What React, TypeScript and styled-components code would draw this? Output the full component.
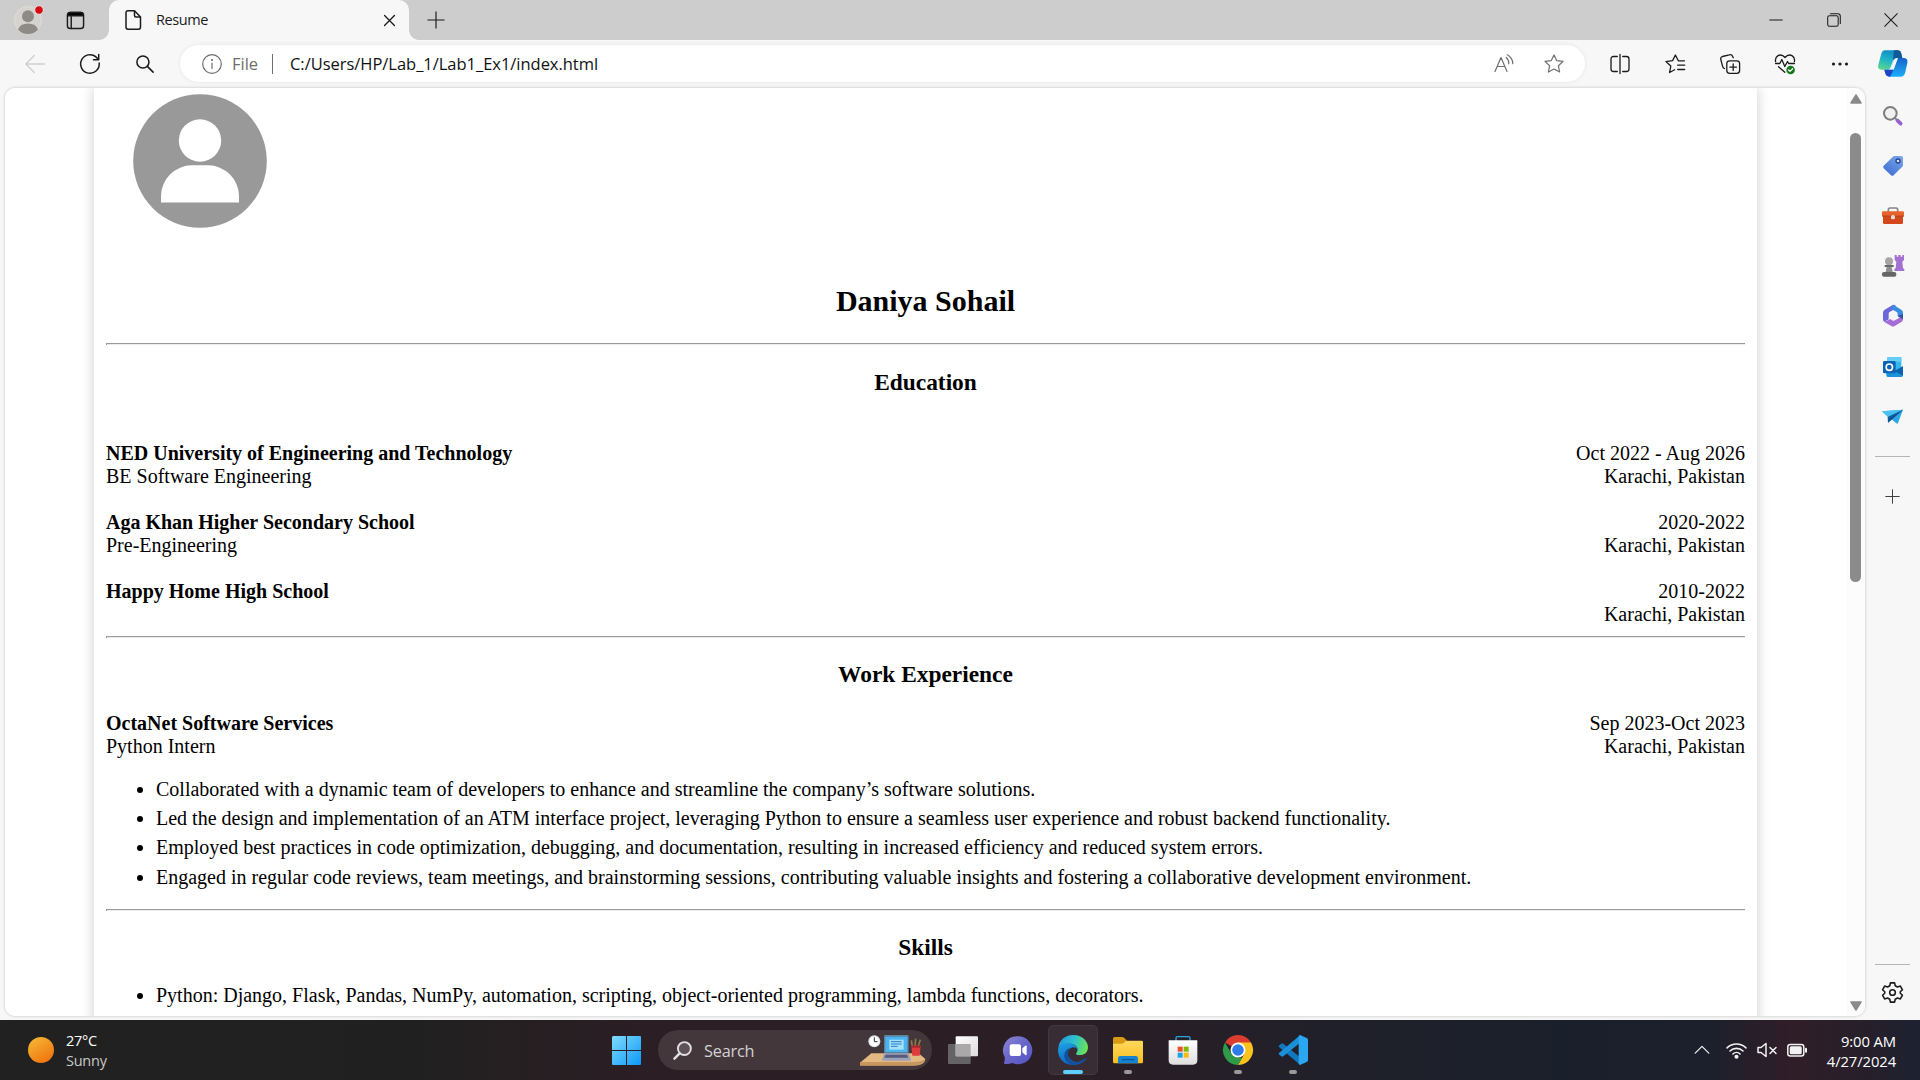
import React from "react";
import styled, { createGlobalStyle } from "styled-components";

const Global = createGlobalStyle`
  * { box-sizing: border-box; }
  body { margin: 0; background: #f7f7f7; overflow: hidden; }
  svg { display: block; overflow: visible; flex: none; }
`;

const uiFont = `"Open Sans", "Noto Sans", sans-serif`;

const Screen = styled.div`
  width: 1920px;
  height: 1080px;
  display: flex;
  flex-direction: column;
  overflow: hidden;
  font-family: ${uiFont};
  background: #f7f7f7;
`;

/* ---------- tab strip ---------- */
const TabStrip = styled.header`
  height: 40px;
  display: flex;
  align-items: center;
  background: #cdcdcd;
`;
const ProfileButton = styled.div`
  width: 55px;
  padding-left: 13px;
`;
const WorkspaceButton = styled.div`
  width: 54px;
  padding-left: 11px;
`;
const Tab = styled.div`
  position: relative;
  width: 300px;
  height: 40px;
  display: flex;
  align-items: center;
  padding: 0 14px 0 16px;
  background: #f7f7f7;
  border-radius: 10px 10px 0 0;
  &::before, &::after {
    content: "";
    position: absolute;
    bottom: 0;
    width: 10px;
    height: 10px;
  }
  &::before { left: -10px; background: radial-gradient(circle at 0 0, #cdcdcd 9.5px, #f7f7f7 10.2px); }
  &::after { right: -10px; background: radial-gradient(circle at 100% 0, #cdcdcd 9.5px, #f7f7f7 10.2px); }
`;
const TabTitle = styled.span`
  flex: 1;
  margin-left: 14px;
  font-size: 14.5px;
  line-height: 20px;
  letter-spacing: -0.4px;
  color: #1b1b1b;
`;
const NewTab = styled.div`
  margin-left: 18px;
`;
const WindowButtons = styled.div`
  margin-left: auto;
  display: flex;
`;
const WindowButton = styled.div`
  width: 57.5px;
  display: flex;
  justify-content: center;
`;

/* ---------- toolbar ---------- */
const Toolbar = styled.div`
  height: 48px;
  display: flex;
  align-items: center;
  padding: 0 0 1px 7px;
`;
const ToolSlot = styled.div<{ $w?: number }>`
  width: ${(p) => p.$w ?? 55}px;
  display: flex;
  justify-content: center;
`;
const AddressBar = styled.div`
  width: 1405px;
  height: 37px;
  margin: 0 7px 0 8px;
  padding: 0 21px 0 22px;
  display: flex;
  align-items: center;
  background: #fff;
  border-radius: 19px;
  box-shadow: 0 0 4px rgba(0, 0, 0, 0.08);
`;
const Scheme = styled.span`
  width: 40px;
  margin-left: 10px;
  font-size: 16.5px;
  letter-spacing: 0;
  color: #6e6e6e;
`;
const SchemeDivider = styled.i`
  width: 1px;
  height: 20px;
  background: #6e6e6e;
  margin-right: 17px;
`;
const Url = styled.span`
  flex: 1;
  font-size: 16.5px;
  letter-spacing: -0.03px;
  color: #111;
  white-space: nowrap;
`;
const AddressActions = styled.div`
  display: flex;
  gap: 30px;
`;

/* ---------- page area ---------- */
const Body = styled.div`
  height: 932px;
  display: flex;
  align-items: flex-start;
  padding-left: 5px;
`;
const Viewport = styled.main`
  width: 1860px;
  height: 928px;
  display: flex;
  background: #fff;
  border-radius: 10px;
  overflow: hidden;
`;
const ViewportFrame = styled.div`
  border-radius: 10px;
  box-shadow: 0 0 3px rgba(0, 0, 0, 0.25);
`;
const Canvas = styled.div`
  flex: 1;
  padding-left: 89px;
`;
const Sheet = styled.article`
  width: 1663px;
  height: 1400px;
  padding: 6px 12px 0;
  background: #fff;
  box-shadow: 0 0 12.5px rgba(0, 0, 0, 0.2);
  font-family: "Liberation Serif", "Times New Roman", serif;
  font-size: 20px;
  line-height: 23px;
  color: #000;
`;
const Portrait = styled.div`
  margin: 0 0 56px 27px;
`;
const Name = styled.h1`
  margin: 0;
  font-size: 30px;
  line-height: 34px;
  text-align: center;
`;
const Rule = styled.hr<{ $top: number }>`
  height: 2px;
  margin: ${(p) => p.$top}px 0 0;
  border: 0;
  border-top: 1px solid #9a9a9a;
  border-left: 1px solid #9a9a9a;
  background: #ececec;
`;
const Heading = styled.h3<{ $top?: number }>`
  margin: ${(p) => p.$top ?? 24}px 0 0;
  font-size: 23.4px;
  line-height: 26px;
  text-align: center;
`;
const Entries = styled.div<{ $top: number }>`
  display: flex;
  flex-direction: column;
  gap: 23px;
  margin-top: ${(p) => p.$top}px;
`;
const Entry = styled.div`
  display: flex;
  justify-content: space-between;
`;
const EntrySide = styled.div<{ $right?: boolean }>`
  display: flex;
  flex-direction: column;
  text-align: ${(p) => (p.$right ? "right" : "left")};
`;
const Bullets = styled.ul<{ $top: number }>`
  margin: ${(p) => p.$top}px 0 0;
  padding-left: 50px;
`;
const Bullet = styled.li`
  margin-bottom: 6.25px;
`;
const Scrollbar = styled.div`
  width: 18px;
  height: 928px;
  display: flex;
  flex-direction: column;
  align-items: center;
  padding: 6px 1px 5px 0;
  background: #fcfcfc;
`;
const Thumb = styled.div`
  width: 11px;
  height: 449px;
  margin: 29px 0 auto;
  border-radius: 6px;
  background: #8b8b8b;
`;

/* ---------- sidebar ---------- */
const Sidebar = styled.aside`
  width: 55px;
  height: 932px;
  display: flex;
  flex-direction: column;
  align-items: center;
  padding-top: 3px;
`;
const SideSlot = styled.div<{ $h?: number }>`
  height: ${(p) => p.$h ?? 50.1}px;
  display: flex;
  align-items: center;
`;
const SideRule = styled.i<{ $top?: string }>`
  width: 35px;
  height: 1px;
  margin-top: ${(p) => p.$top ?? "0"};
  background: #b5b5b5;
`;

/* ---------- taskbar ---------- */
const Taskbar = styled.footer`
  height: 60px;
  display: flex;
  align-items: center;
  color: #fff;
  background: linear-gradient(90deg, #212121 0, #212020 420px, #2b1e24 640px, #2b1e25 1080px, #20202a 1330px, #1a202b 1560px, #1b202c 1710px, #301e28 1790px, #2a1f29 1840px, #1e2130 1920px);
`;
const Weather = styled.div`
  width: 599px;
  display: flex;
  align-items: center;
  gap: 12px;
  padding-left: 28px;
`;
const WeatherText = styled.div`
  display: flex;
  flex-direction: column;
  padding-top: 1px;
  font-size: 14.5px;
  line-height: 20px;
  letter-spacing: -0.25px;
`;
const Dim = styled.span`
  color: #c9c9c9;
`;
const StartButton = styled.div`
  width: 59px;
  padding-left: 13px;
`;
const SearchBox = styled.div`
  width: 274px;
  height: 40px;
  display: flex;
  align-items: center;
  padding: 0 6px 0 15px;
  margin-right: 3px;
  border-radius: 20px;
  background: #43373c;
`;
const SearchLabel = styled.span`
  flex: 1;
  margin: 1px 0 0 12px;
  font-size: 16.3px;
  letter-spacing: -0.2px;
  color: #d5d1d3;
`;
const AppSlot = styled.div`
  width: 55px;
  display: flex;
  justify-content: center;
`;
const AppTile = styled.div<{ $active?: boolean }>`
  width: 50px;
  height: 50px;
  display: flex;
  flex-direction: column;
  align-items: center;
  justify-content: space-between;
  padding: ${(p) => (p.$active ? "9px 0 0" : "10px 0 1px")};
  border-radius: 5px;
  border: ${(p) => (p.$active ? "1px solid #43383f" : "0")};
  background: ${(p) => (p.$active ? "#392d35" : "transparent")};
`;
const Indicator = styled.i<{ $kind?: "active" | "open" }>`
  width: ${(p) => (p.$kind === "active" ? 20 : 8)}px;
  height: 4px;
  border-radius: 2px;
  background: ${(p) => (p.$kind === "active" ? "#60cdff" : p.$kind ? "#9b989c" : "transparent")};
`;
const Tray = styled.div`
  margin-left: auto;
  display: flex;
  align-items: center;
  padding-right: 24px;
`;
const TrayIcons = styled.div`
  display: flex;
  align-items: center;
  gap: 10px;
`;
const Overflow = styled.div`
  margin-right: 6px;
`;
const Clock = styled.div`
  width: 89px;
  display: flex;
  flex-direction: column;
  padding-top: 1px;
  text-align: right;
  font-size: 14.8px;
  line-height: 20px;
  letter-spacing: -0.1px;
`;

/* Line drawing wrapper: 20-unit grid, stroke only */
const Line = ({ s = 20, c = "#1b1b1b", w = 1.3, children }: { s?: number; c?: string; w?: number; children: React.ReactNode }) => (
  <svg width={s} height={s} viewBox="0 0 20 20" fill="none" stroke={c} strokeWidth={w} strokeLinecap="round" strokeLinejoin="round">
    {children}
  </svg>
);

const starPath = "M10 .9l2.7 5.7 6.3.8-4.6 4.3 1.2 6.3L10 15l-5.6 3 1.2-6.3L1 7.400l6.3-.8z";

const Copilot = () => (
  <svg width="30" height="27" viewBox="0 0 90 81">
    <defs>
      <linearGradient id="cpa" x1=".6" y1="0" x2=".2" y2="1"><stop stopColor="#1389c6" /><stop offset=".5" stopColor="#1fb3c6" /><stop offset="1" stopColor="#58d88a" /></linearGradient>
      <linearGradient id="cpb" x1=".5" y1="0" x2=".5" y2="1"><stop stopColor="#1663c9" /><stop offset="1" stopColor="#1eaefb" /></linearGradient>
    </defs>
    <path d="M21 1h38q8 0 11 10l3 13H58q-10 0-13 8l-8 21q-2 6-8 6H11Q-3 58 1 44L9 14Q12 1 21 1z" fill="url(#cpa)" />
    <path d="M48 1h11q8 0 11 10l3 13H57q-9 0-12 7 2-22 3-30z" fill="#125a96" />
    <path d="M69 80H34q-9 0-12-10l-3-11h10q8 0 11-8l8-21q2-6 9-6h19q15 0 12 15l-6 27Q79 80 69 80z" fill="url(#cpb)" />
    <path d="M48 30q2-6 9-6h3L47 59H29q8 0 11-8z" fill="#f7f9fc" />
    <path d="M19 59h27l-7 17q-2 4-5 4-9 0-12-10z" fill="#1c47c7" />
  </svg>
);

const Edge = () => (
  <svg width="30" height="30" viewBox="0 0 90 90">
    <defs>
      <linearGradient id="ea" x1="0" y1=".3" x2="1" y2=".5"><stop stopColor="#2598dc" /><stop offset=".5" stopColor="#2dbfd0" /><stop offset="1" stopColor="#6be454" /></linearGradient>
      <linearGradient id="eb" x1=".2" y1="0" x2=".5" y2="1"><stop stopColor="#1c9fe4" /><stop offset="1" stopColor="#0f63bb" /></linearGradient>
    </defs>
    <path d="M1 38C4 14 23 0 46 0c26 0 44 18 44 37 0 15-11 24-25 24-11 0-13-5-10-8 3-4 4-8 3-13-2-9-12-14-23-14C19 26 6 31 1 38z" fill="url(#ea)" />
    <path d="M0 46c0-13 12-22 28-22 18 0 29 9 30 19-4-6-11-8-18-5-12 5-13 17-8 28 7 14 23 18 40 14-8 7-18 10-28 10C18 90 0 70 0 46z" fill="url(#eb)" />
    <path d="M36 40c-8 10-9 24 1 34 11 11 29 9 45-4 3-2 5 0 3 2-9 12-23 18-38 18-19-3-29-17-28-31 1-9 7-17 17-19z" fill="#12519f" />
    <path d="M57 43c2 5 0 8-2 10-3 3-1 8 10 8 5 0 10-1 14-4l6 9c-14 9-34 8-42-3-5-8-3-18 3-22 4-2 8-1 11 2z" fill="#392d35" />
  </svg>
);

const Chrome = () => (
  <svg width="30" height="30" viewBox="0 0 90 90">
    <path d="M45 45L6 22.500A45 45 0 0 1 84 22.500z" fill="#dc3b2f" />
    <path d="M45 22.500H84A45 45 0 0 1 45 90L64 56z" fill="#fcc21b" />
    <path d="M6 22.500L25.500 56 45 67.500h13L45 90A45 45 0 0 1 6 22.500z" fill="#2f9a48" />
    <circle cx="45" cy="45" r="22.500" fill="#fff" />
    <circle cx="45" cy="45" r="17.500" fill="#2f7de9" />
  </svg>
);

const VsCode = () => (
  <svg width="30" height="30" viewBox="0 0 90 90">
    <path d="M4 31l6-5q3-2 6 0l54 44-4 19L3 36q-3-2 1-5z" fill="#1178bd" />
    <path d="M4 59l6 5q3 2 6 0l54-44L66 1 3 54q-3 2 1 5z" fill="#1b8fd8" />
    <path d="M66 0l20 9q4 2 4 6v60q0 4-4 6l-20 9q-4-1-4-5V5q0-4 4-5z" fill="#2ba7f2" />
  </svg>
);

const Folder = () => (
  <svg width="30" height="30" viewBox="0 0 90 90">
    <defs><linearGradient id="fo" x1="0" y1="0" x2="0" y2="1"><stop stopColor="#ffd95c" /><stop offset="1" stopColor="#f9bd20" /></linearGradient></defs>
    <path d="M0 11q0-5 5-5h22q4 0 7 3l7 7v14H0z" fill="#d99a13" />
    <path d="M0 26h26q4 0 7-3l7-6h46q4 0 4 4v59q0 5-4 5H4q-4 0-4-5z" fill="url(#fo)" />
    <path d="M15 85V70q0-7 7-7h46q7 0 7 7v15z" fill="#1583cf" />
    <path d="M27 74h37" stroke="#0b4f8d" strokeWidth="3" />
  </svg>
);

const Store = () => (
  <svg width="30" height="30" viewBox="0 0 90 90">
    <defs><linearGradient id="st" x1="0" y1="0" x2="0" y2="1"><stop stopColor="#fff" /><stop offset="1" stopColor="#dedede" /></linearGradient></defs>
    <path d="M24 20V9q0-4 4-4h34q4 0 4 4v11" fill="none" stroke="#2ba5dd" strokeWidth="4" />
    <path d="M2 16h86v60q0 13-13 13H15Q2 89 2 76z" fill="url(#st)" />
    <path d="M29 35h15v15H29z" fill="#e8512c" /><path d="M47 35h15v15H47z" fill="#80b900" />
    <path d="M29 53h15v15H29z" fill="#18a5e8" /><path d="M47 53h15v15H47z" fill="#fcb90f" />
  </svg>
);

const Chat = () => (
  <svg width="30" height="30" viewBox="0 0 90 90">
    <defs><linearGradient id="ch" x1="0" y1="0" x2="1" y2="1"><stop stopColor="#8e86d2" /><stop offset=".5" stopColor="#6865c8" /><stop offset="1" stopColor="#5254c6" /></linearGradient></defs>
    <path d="M45 4a42 42 0 1 1-17 80Q16 89 4 86q-2-1-1-3 3-8 2-17A42 42 0 0 1 45 4z" fill="url(#ch)" />
    <rect x="20" y="28" width="34" height="35" rx="6" fill="#fff" /><path d="M58 40l9-8q4-2 4 2v24q0 4-4 2l-9-8z" fill="#fff" />
  </svg>
);

const TaskView = () => (
  <svg width="30" height="30" viewBox="0 0 90 90">
    <defs><linearGradient id="tv" x1="0" y1="0" x2="1" y2="1"><stop stopColor="#fff" /><stop offset="1" stopColor="#dcdcdc" /></linearGradient></defs>
    <rect x="0" y="27" width="68" height="60" rx="3" fill="#666365" />
    <rect x="23" y="4" width="67" height="60" rx="3" fill="url(#tv)" />
    <path d="M23 27h45v37H23z" fill="#aaa8a9" />
  </svg>
);

const Desk = () => (
  <svg width="66" height="32" viewBox="0 0 198 96">
    <path d="M0 86L34 58h142l20 17q-3 19-34 19H0z" fill="#e3b982" />
    <path d="M0 84h160q25 0 36-9-2 20-34 20H0z" fill="#c9965f" />
    <circle cx="43" cy="22" r="18" fill="#dfe5ea" /><circle cx="43" cy="22" r="14" fill="#fff" />
    <path d="M43 10v13h10" stroke="#333" strokeWidth="3" fill="none" />
    <rect x="72" y="3" width="74" height="56" rx="4" fill="#5f7f9d" /><path d="M76 8h66v46H76z" fill="#49b4ee" />
    <path d="M88 17h43v30H88z" fill="#a4e0fb" /><path d="M93 23h32M93 30h32M93 37h20" stroke="#2a7fc0" strokeWidth="3" />
    <path d="M72 58h74l8 22H66z" fill="#9fa0b9" /><path d="M77 62h64l4 9H73z" fill="#555b7a" />
    <path d="M157 38l-3-19M165 38l2-24M174 38l7-21" stroke="#8e7a45" strokeWidth="5" />
    <path d="M154 35h28l-3 30h-22z" fill="#df3b3b" /><path d="M154 35h28v6h-28z" fill="#a92530" />
  </svg>
);

const apps: { id: string; icon: React.ReactNode; state?: "active" | "open" }[] = [
  { id: "view", icon: <TaskView /> },
  { id: "chat", icon: <Chat /> },
  { id: "edge", icon: <Edge />, state: "active" },
  { id: "files", icon: <Folder />, state: "open" },
  { id: "store", icon: <Store /> },
  { id: "chrome", icon: <Chrome />, state: "open" },
  { id: "code", icon: <VsCode />, state: "open" },
];

const schools = [
  { title: "NED University of Engineering and Technology", sub: "BE Software Engineering", date: "Oct 2022 - Aug 2026" },
  { title: "Aga Khan Higher Secondary School", sub: "Pre-Engineering", date: "2020-2022" },
  { title: "Happy Home High School", sub: "", date: "2010-2022" },
];
const jobs = [{ title: "OctaNet Software Services", sub: "Python Intern", date: "Sep 2023-Oct 2023" }];
const duties = [
  "Collaborated with a dynamic team of developers to enhance and streamline the company’s software solutions.",
  "Led the design and implementation of an ATM interface project, leveraging Python to ensure a seamless user experience and robust backend functionality.",
  "Employed best practices in code optimization, debugging, and documentation, resulting in increased efficiency and reduced system errors.",
  "Engaged in regular code reviews, team meetings, and brainstorming sessions, contributing valuable insights and fostering a collaborative development environment.",
];

const EntryList = ({ items, top }: { items: typeof schools; top: number }) => (
  <Entries $top={top}>
    {items.map((e) => (
      <Entry key={e.title}>
        <EntrySide><b>{e.title}</b>{e.sub && <span>{e.sub}</span>}</EntrySide>
        <EntrySide $right><span>{e.date}</span><span>Karachi, Pakistan</span></EntrySide>
      </Entry>
    ))}
  </Entries>
);

const sideIcons: React.ReactNode[] = [
  <svg width="20" height="20" viewBox="0 0 60 60"><circle cx="22" cy="22" r="19" fill="#f0f0f0" stroke="#7d7d7d" strokeWidth="6" /><path d="M36 36l5 5" stroke="#7d7d7d" strokeWidth="5" /><path d="M43 43l10 10" stroke="#9663cb" strokeWidth="11" strokeLinecap="round" /></svg>,
  <svg width="20" height="20" viewBox="0 0 60 60"><defs><linearGradient id="tg" x1="1" y1="0" x2=".3" y2="1"><stop stopColor="#7fa9ec" /><stop offset="1" stopColor="#4170d4" /></linearGradient></defs><path d="M29 3Q31 0 35 0h20q5 0 5 5v22q0 4-3 6L32 58q-4 3-8 0L2 37q-3-4 0-8z" fill="url(#tg)" /><circle cx="45" cy="15" r="6" fill="#d9e5fa" stroke="#22448c" strokeWidth="4" /></svg>,
  <svg width="22" height="18" viewBox="0 0 66 54"><path d="M19 15V8q0-5 5-5h18q5 0 5 5v7" fill="none" stroke="#858585" strokeWidth="5" /><rect x="3" y="24" width="60" height="27" rx="4" fill="#d5481b" /><rect x="0" y="13" width="66" height="16" rx="4" fill="#e8622c" /><path d="M1 26h64v3H1z" fill="#b03a12" /><rect x="27" y="24" width="12" height="13" rx="5" fill="#e0dcda" /></svg>,
  <svg width="22" height="22" viewBox="0 0 66 66"><path d="M38 0h6v5h5V0h7v5h5V0h5v15l-5 5 2 19 4 4v5H37v-5l4-4 2-19-5-5z" fill="#a471d2" /><circle cx="21" cy="19" r="12" fill="#a5a5a5" /><path d="M8 30h27v6H8z" fill="#666" /><path d="M14 35h15l3 16H11z" fill="#8f8f8f" /><rect x="0" y="51" width="43" height="14" rx="6" fill="#666" /></svg>,
  <svg width="20" height="22" viewBox="0 0 60 66"><path d="M29 0L5 14Q0 17 0 23v20q0 5 4 8l13-8V26q0-4 4-6l17-9V2q-4-4-9-2z" fill="#6a67d8" /><path d="M33 1l22 13q5 3 5 9v21L44 34V27q0-4-3-6l-15-8 3-13z" fill="#3b8de0" /><path d="M60 42q0 6-5 9L35 63q-5 3-10 0L4 51l18-9 8 5q3 1 6-1l24-14z" fill="#a56cd6" /><path d="M44 33l16 10V26z" fill="#3551a5" /><circle cx="30" cy="33" r="11" fill="#f5f4fb" /></svg>,
  <svg width="20" height="20" viewBox="0 0 60 60"><rect x="13" y="0" width="42" height="50" rx="3" fill="#35b8f1" /><path d="M13 0h42v14H13z" fill="#64cdf8" /><path d="M10 32l25 10 25-14v27q0 5-5 5H14q-4 0-4-5z" fill="#1b93d8" /><path d="M60 28v28L34 42z" fill="#0d62ad" /><rect x="0" y="12" width="38" height="37" rx="4" fill="#0b63b5" /><circle cx="19" cy="30.500" r="9.500" fill="none" stroke="#fff" strokeWidth="5" /></svg>,
  <svg width="21" height="16" viewBox="0 0 63 48"><path d="M0 7L63 2 48 42q-2 4-5 1L23 26z" fill="#2ba8e5" /><path d="M0 7L63 2 17 24z" fill="#49c0f2" /><path d="M63 2L17 24l1 17z" fill="#115c9d" /><path d="M63 2L23 29l-5 12 10-9z" fill="#0e4f8c" /></svg>,
];

export default function App() {
  return (
    <Screen>
      <Global />
      <TabStrip>
        <ProfileButton>
          <svg width="30" height="30" viewBox="0 0 30 30">
            <circle cx="15" cy="15" r="13.500" fill="#d5d3cf" stroke="#dedcd9" />
            <circle cx="15" cy="11.200" r="6" fill="#8e8a85" />
            <path d="M5 24.500q2-6 10-6t10 6q-4 4.500-10 4.500t-10-4.500z" fill="#8e8a85" />
            <circle cx="26" cy="5" r="4.300" fill="#d90b12" stroke="#e5e5e5" />
          </svg>
        </ProfileButton>
        <WorkspaceButton>
          <Line s={19} w={1.5}>
            <rect x="1.500" y="1.500" width="17" height="17" rx="3" /><path d="M5.500 6v12.500" /><path d="M2 5V4q0-2.500 2.500-2.500h11Q18 1.500 18 4v1z" fill="#000" />
          </Line>
        </WorkspaceButton>
        <Tab>
          <svg width="17" height="20" viewBox="0 0 17 20" fill="none" stroke="#1b1b1b" strokeWidth="1.500" strokeLinejoin="round">
            <path d="M3 .8h6.500L15.500 7v10q0 2.200-2 2.200H3q-2 0-2-2.200V3Q1 .8 3 .8z" /><path d="M9.500 1v4.500q0 1.500 1.500 1.500h4.500" />
          </svg>
          <TabTitle>Resume</TabTitle>
          <Line s={11} w={2.4}><path d="M1 1l18 18M19 1L1 19" /></Line>
        </Tab>
        <NewTab><Line s={18} w={1.3}><path d="M10 1v18M1 10h18" /></Line></NewTab>
        <WindowButtons>
          <WindowButton><Line s={14} w={1.5}><path d="M1 10h18" /></Line></WindowButton>
          <WindowButton><Line s={14} w={1.5}><rect x="1" y="4" width="15" height="15" rx="2.500" /><path d="M5 1.200h10.500q3.500 0 3.500 3.500V15" /></Line></WindowButton>
          <WindowButton><Line s={14} w={1.5}><path d="M1 1l18 18M19 1L1 19" /></Line></WindowButton>
        </WindowButtons>
      </TabStrip>

      <Toolbar>
        <ToolSlot><Line c="#cfcfcf"><path d="M19.500 10H.8M9.300 1.500L.8 10l8.500 8.500" /></Line></ToolSlot>
        <ToolSlot><Line s={20} w={1.5}><path d="M19.200 9A9.300 9.300 0 1 1 16 2.900L18.500 5.500M18.700 .6V5.700H13.500" /></Line></ToolSlot>
        <ToolSlot><Line s={18} w={1.7}><circle cx="7.700" cy="7.700" r="6.700" /><path d="M12.600 12.600l6.400 6.400" /></Line></ToolSlot>
        <AddressBar>
          <Line c="#6e6e6e" w={1.2}><circle cx="10" cy="10" r="9.300" /><path d="M10 9v5.500" /><circle cx="10" cy="6" r=".5" fill="#6e6e6e" /></Line>
          <Scheme>File</Scheme>
          <SchemeDivider />
          <Url>C:/Users/HP/Lab_1/Lab1_Ex1/index.html</Url>
          <AddressActions>
            <Line c="#6e6e6e" w={1.2}><path d="M1 17.500L7 3.500l6 14M3.200 12.500h7.700M12.200 3.500a8 8 0 0 1 2.600 6.300M13.300 .8a10.500 10.500 0 0 1 5.500 8.800" /></Line>
            <Line c="#6e6e6e" w={1.2}><path d={starPath} /></Line>
          </AddressActions>
        </AddressBar>
        <ToolSlot><Line w={1.3}><path d="M7.300 2.500H3.500Q1 2.500 1 5v10q0 2.500 2.500 2.500h3.800M12.700 2.500h3.800Q19 2.500 19 5v10q0 2.500-2.500 2.500h-3.800M10 .5v19" /></Line></ToolSlot>
        <ToolSlot><Line w={1.3}><path d="M19.500 6.800h-6.200L10.400 1 7.600 6.600 .9 7.600l4.900 4.500-1.200 6.400 5-2.700M12.700 11.200h7M12.700 15.500h7" /></Line></ToolSlot>
        <ToolSlot><Line w={1.3}><rect x="6.800" y="6.800" width="12.800" height="12.500" rx="2.800" /><path d="M13.200 9.800v6.600M9.900 13.100h6.600M4.500 14.500Q3 14 2.600 12.300L.8 5.500Q.2 3.200 2.500 2.500L9.300.8q2.500-.7 3.400 1.700l.5 1.300" /></Line></ToolSlot>
        <ToolSlot>
          <Line w={1.3}>
            <path d="M.6 7.700Q-.2 3.500 3 1.600 6.800-.2 10 3.500 13.200-.2 17 1.600q3.200 1.900 2.400 6.100M.6 9.500h4.200l2-4 3 7 2.700-5 1.200 2h5.700M3.500 12.800l6.300 5.500" />
            <circle cx="15.600" cy="16" r="4.300" fill="#117a1a" stroke="none" /><path d="M13.600 16l1.400 1.400 2.600-2.700" stroke="#fff" />
          </Line>
        </ToolSlot>
        <ToolSlot><Line><g fill="#1b1b1b" stroke="none"><circle cx="3.500" cy="10" r="1.600" /><circle cx="10" cy="10" r="1.600" /><circle cx="16.500" cy="10" r="1.600" /></g></Line></ToolSlot>
        <ToolSlot $w={52}><Copilot /></ToolSlot>
      </Toolbar>

      <Body>
        <ViewportFrame>
          <Viewport>
            <Canvas>
              <Sheet>
                <Portrait>
                  <svg width="134" height="134" viewBox="0 0 134 134">
                    <circle cx="67" cy="67" r="66.800" fill="#999" />
                    <circle cx="67" cy="46.500" r="21.200" fill="#fff" />
                    <path d="M28 108.500V102A31 31 0 0 1 59 71.300H75A31 31 0 0 1 106 102V108.500z" fill="#fff" />
                  </svg>
                </Portrait>
                <Name>Daniya Sohail</Name>
                <Rule $top={25} />
                <Heading>Education</Heading>
                <EntryList items={schools} top={47} />
                <Rule $top={10} />
                <Heading $top={23}>Work Experience</Heading>
                <EntryList items={jobs} top={25} />
                <Bullets $top={19.75}>{duties.map((d) => <Bullet key={d}>{d}</Bullet>)}</Bullets>
                <Rule $top={20.5} />
                <Heading $top={23}>Skills</Heading>
                <Bullets $top={24}><Bullet>Python: Django, Flask, Pandas, NumPy, automation, scripting, object-oriented programming, lambda functions, decorators.</Bullet></Bullets>
              </Sheet>
            </Canvas>
            <Scrollbar>
              <svg width="12" height="10" viewBox="0 0 12 10"><path d="M6 1l5 8H1z" fill="#8b8b8b" stroke="#8b8b8b" strokeWidth="1.500" strokeLinejoin="round" /></svg>
              <Thumb />
              <svg width="12" height="10" viewBox="0 0 12 10"><path d="M6 9L1 1h10z" fill="#8b8b8b" stroke="#8b8b8b" strokeWidth="1.500" strokeLinejoin="round" /></svg>
            </Scrollbar>
          </Viewport>
        </ViewportFrame>
        <Sidebar>
          {sideIcons.map((icon, i) => <SideSlot key={i}>{icon}</SideSlot>)}
          <SideRule $top="14px" />
          <SideSlot $h={79}><Line s={15} c="#3c3c3c"><path d="M10 1v18M1 10h18" /></Line></SideSlot>
          <SideRule $top="auto" />
          <SideSlot $h={55}>
            <Line s={21} w={1.5}>
              <circle cx="10" cy="10" r="2.700" />
              <path d="M8 .8h4l.6 2.800 2.100 1.200 2.800-.9 2 3.500-2.100 1.900v1.400l2.100 1.900-2 3.500-2.800-.9-2.100 1.200-.6 2.800H8l-.6-2.800-2.100-1.200-2.800.9-2-3.500 2.100-1.900V9.300L.5 7.400l2-3.500 2.800.9 2.100-1.200z" />
            </Line>
          </SideSlot>
        </Sidebar>
      </Body>

      <Taskbar>
        <Weather>
          <svg width="26" height="26" viewBox="0 0 26 26">
            <defs><linearGradient id="sun" x1=".15" y1="0" x2=".8" y2="1"><stop stopColor="#f6b832" /><stop offset="1" stopColor="#f0700e" /></linearGradient></defs>
            <circle cx="13" cy="13" r="13" fill="url(#sun)" />
          </svg>
          <WeatherText><span>27°C</span><Dim>Sunny</Dim></WeatherText>
        </Weather>
        <StartButton>
          <svg width="29" height="29" viewBox="0 0 29 29">
            <defs><linearGradient id="win" gradientUnits="userSpaceOnUse" x1="0" y1="0" x2="29" y2="29"><stop stopColor="#7fdcfd" /><stop offset="1" stopColor="#0d98f8" /></linearGradient></defs>
            <path d="M1 0h13v14H0V1zM15 0h13q1 0 1 1v13H15zM0 15h14v14H1q-1 0-1-1zM15 15h14v13q0 1-1 1H15z" fill="url(#win)" />
          </svg>
        </StartButton>
        <SearchBox>
          <Line s={19} c="#e3e0e1" w={2}><circle cx="12" cy="8" r="6.800" fill="#5c5257" /><path d="M7 13l-5.500 5.500" strokeWidth="2.600" /></Line>
          <SearchLabel>Search</SearchLabel>
          <Desk />
        </SearchBox>
        {apps.map((a) => (
          <AppSlot key={a.id}>
            <AppTile $active={a.state === "active"}>{a.icon}<Indicator $kind={a.state} /></AppTile>
          </AppSlot>
        ))}
        <Tray>
          <TrayIcons>
            <Overflow><Line s={16} c="#f2f2f2" w={1.5}><path d="M1.500 14L10 5.500l8.500 8.500" /></Line></Overflow>
            <Line s={21} c="#f2f2f2" w={1.5}><path d="M1 7.500a12.700 12.700 0 0 1 18 0M3.800 10.500a8.800 8.800 0 0 1 12.400 0M6.600 13.300a4.900 4.900 0 0 1 6.800 0" /><circle cx="10" cy="16" r="1.200" fill="#f2f2f2" /></Line>
            <Line c="#f2f2f2" w={1.5}><path d="M1 7.500h3L9 3.500v13L4 12.500H1zM13 7.500l6 6M19 7.500l-6 6" /></Line>
            <Line c="#f2f2f2" w={1.5}><rect x=".8" y="4.500" width="16" height="11.500" rx="2.500" /><rect x="3.500" y="7" width="10.500" height="6.500" rx=".8" fill="#f2f2f2" /><path d="M19 8.800v3" strokeWidth="2" /></Line>
          </TrayIcons>
          <Clock><span>9:00 AM</span><span>4/27/2024</span></Clock>
        </Tray>
      </Taskbar>
    </Screen>
  );
}
